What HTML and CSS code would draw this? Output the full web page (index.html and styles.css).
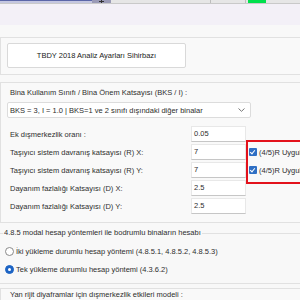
FILE: index.html
```html
<!DOCTYPE html>
<html lang="tr">
<head>
    <meta charset="UTF-8">
    <meta name="viewport" content="width=device-width, initial-scale=1.0">
    <title>Analiz Ayarları</title>
    <link rel="stylesheet" href="styles.css">
</head>
<body>

    <div class="topbar">
        <span class="tb-blue"></span>
        <span class="tb-grip">
            <svg width="19" height="3" viewBox="0 0 19 3">
                <path d="M7 1.5 H12 M9.5 0 V3" stroke="#333" stroke-width="1"/>
            </svg>
        </span>
        <span class="tb-rest">
            <span class="tb-cell tb-wide"></span>
            <span class="tb-cell tb-mid"></span>
            <span class="tb-green"></span>
        </span>
    </div>
    <div class="title-band"></div>

    <div class="content">
        <div class="panel panel-wizard">
            <button class="wizard-button">TBDY 2018 Analiz Ayarları Sihirbazı</button>
        </div>

        <div class="panel panel-params">
            <div class="field-label">Bina Kullanım Sınıfı / Bina Önem Katsayısı (BKS / I) :</div>
            <div class="select-box">
                <span>BKS = 3, I = 1.0 | BKS=1 ve 2 sınıfı dışındaki diğer binalar</span>
                <svg class="chevron" width="7" height="4" viewBox="0 0 7 4">
                    <path d="M0.5 0.5 L3.5 3.3 L6.5 0.5" fill="none" stroke="#777" stroke-width="1"/>
                </svg>
            </div>

            <div class="param-grid">
                <label class="row-label">Ek dışmerkezlik oranı :</label>
                <div class="text-input">0.05</div>
                <div></div>

                <label class="row-label">Taşıyıcı sistem davranış katsayısı (R) X:</label>
                <div class="text-input">7</div>
                <div class="highlight-box">
                    <div class="check-row"><span class="check"></span>(4/5)R Uygulansın</div>
                    <div class="check-row"><span class="check"></span>(4/5)R Uygulansın</div>
                </div>

                <label class="row-label">Taşıyıcı sistem davranış katsayısı (R) Y:</label>
                <div class="text-input">7</div>

                <label class="row-label">Dayanım fazlalığı Katsayısı (D) X:</label>
                <div class="text-input">2.5</div>
                <div></div>

                <label class="row-label">Dayanım fazlalığı Katsayısı (D) Y:</label>
                <div class="text-input">2.5</div>
                <div></div>
            </div>
        </div>

        <fieldset class="modal-set">
            <legend>4.8.5 modal hesap yöntemleri ile bodrumlu binaların hesabı</legend>
            <div class="radio-row"><span class="radio"></span>İki yükleme durumlu hesap yöntemi (4.8.5.1, 4.8.5.2, 4.8.5.3)</div>
            <div class="radio-row"><span class="radio checked"></span>Tek yükleme durumlu hesap yöntemi (4.3.6.2)</div>
        </fieldset>

        <div class="panel panel-last">
            <div class="field-label">Yan rijit diyaframlar için dışmerkezlik etkileri modeli :</div>
        </div>
    </div>

</body>
</html>
```

FILE: styles.css
```css
body {
    font-family: "Liberation Sans", Arial, sans-serif;
    font-size: 7.5px;
    color: #2e2e2e;
    margin: 0;
    width: 300px;
    height: 300px;
    overflow: hidden;
    background-color: #f8f8f8;
}
.topbar {
    display: flex;
    height: 3px;
    border-bottom: 1px solid #c9c9c9;
    background: #e6e6e6;
}
.tb-blue {
    width: 92px;
    background: linear-gradient(#5b66a8 0, #5b66a8 1px, #c4c6e0 1px);
}
.tb-grip {
    display: flex;
    width: 19px;
    background: #9a9ab6;
}
.tb-rest {
    flex: 1;
    display: flex;
}
.tb-cell {
    border-right: 1px solid #bdbdbd;
}
.tb-wide {
    width: 99px;
}
.tb-mid {
    width: 34px;
    margin-right: 2px;
}
.tb-green {
    width: 18px;
    background: #00e04c;
}
.title-band {
    height: 21px;
    background: #f3f0f7;
}
.content {
    width: 340px;
    padding-top: 12px;
}
.panel {
    border: 1px solid #e1e1e1;
    background: #f9f9f9;
    padding: 5px 6px 6px;
}
.wizard-button {
    display: block;
    width: 179px;
    height: 25px;
    background: #fff;
    border: 1px solid #d9d9d9;
    border-radius: 2px;
    font-family: inherit;
    font-size: 7.5px;
    color: #222;
    padding: 0;
}
.panel-params {
    margin-top: 7px;
    padding: 5px 6px 8px;
}
.field-label {
    line-height: 10px;
    margin-left: 3px;
}
.select-box {
    display: flex;
    align-items: center;
    justify-content: space-between;
    width: 235px;
    height: 14px;
    margin-top: 4px;
    padding: 0 5px 0 2px;
    background: #fff;
    border: 1px solid #dcdcdc;
    border-radius: 2px;
}
.param-grid {
    display: grid;
    grid-template-columns: 184px 55px 1fr;
    grid-auto-rows: 16px;
    row-gap: 2px;
    margin-top: 8px;
    align-items: center;
}
.row-label {
    margin-left: 3px;
}
.text-input {
    height: 14px;
    line-height: 14px;
    padding-left: 2px;
    background: #fff;
    border: 1px solid #e8e8e8;
    border-bottom-color: #c6c6c6;
}
.highlight-box {
    grid-column: 3;
    grid-row: 2 / span 2;
    align-self: stretch;
    margin: -4px 0 -6px;
    border: 2px solid #e3121c;
    padding: 1px 0 0 1px;
}
.check-row {
    display: flex;
    align-items: center;
    height: 18px;
    white-space: nowrap;
}
.check {
    position: relative;
    width: 8px;
    height: 8px;
    margin-right: 2px;
    background: #2f6fc4;
    border-radius: 1px;
}
.check::after {
    content: "";
    position: absolute;
    left: 2px;
    top: 1px;
    width: 2px;
    height: 4px;
    border: solid #fff;
    border-width: 0 1px 1px 0;
    transform: rotate(40deg);
}
.modal-set {
    margin: 5px 0 0;
    padding: 4px 3px 5px;
    border: 1px solid #e1e1e1;
    border-left: none;
}
.modal-set legend {
    padding: 0 1px;
    margin-left: 0;
    line-height: 10px;
}
.radio-row {
    display: flex;
    align-items: center;
    height: 18px;
}
.radio {
    position: relative;
    width: 7px;
    height: 7px;
    margin: 0 2px 0 2px;
    border: 1px solid #8a8a8a;
    border-radius: 50%;
    background: #fff;
}
.radio.checked {
    border-color: #1d64c4;
    background: #1d64c4;
}
.radio.checked::after {
    content: "";
    position: absolute;
    left: 2px;
    top: 2px;
    width: 3px;
    height: 3px;
    border-radius: 50%;
    background: #fff;
}
.panel-last {
    margin-top: 4px;
    padding: 1px 6px 6px;
}
```
